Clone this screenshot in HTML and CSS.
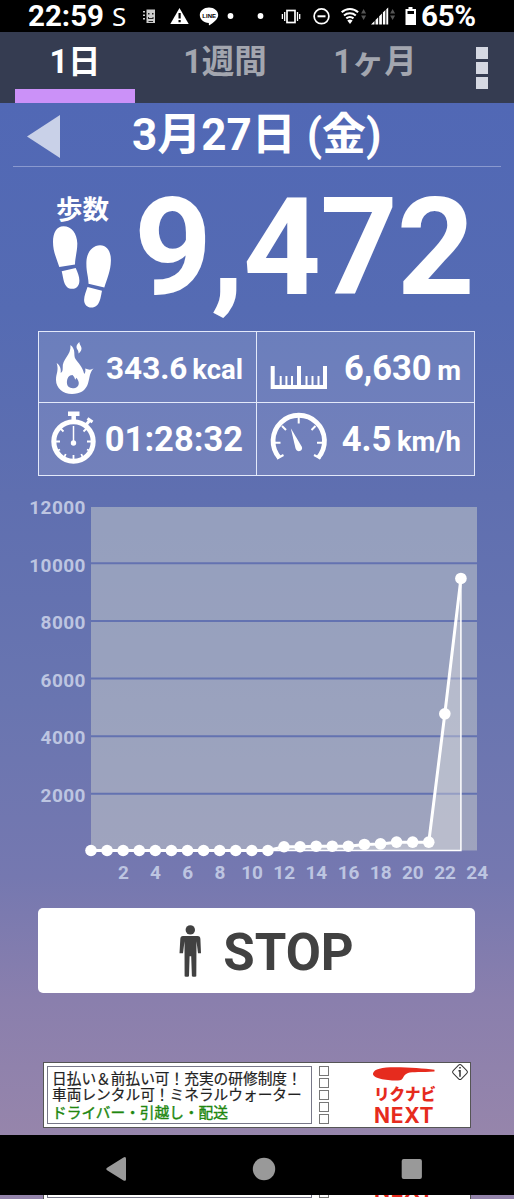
FILE: index.html
```
<!DOCTYPE html>
<html lang="ja">
<head>
  <meta charset="UTF-8">
  <title>歩数計</title>
  <link rel="stylesheet" href="styles.css">
</head>
<body>

  <!-- status bar -->
  <div id="status-bar">
    <span class="clock">22:59</span>
    <span class="carrier">S</span>
    <svg class="status-icons" width="270" height="32" viewBox="135 0 270 32">
      <g fill="#ccc">
        <path d="M146.500 9.500h8.500v13.500h-8.500z"/>
        <path d="M143 11h2v1.500h-2zM143 14.500h2v1.500h-2zM143 18h2v1.500h-2z"/>
        <path fill="#222" d="M148 13h1.500v1.500H148zM152 13h1.500v1.500H152zM148 17h1v1h3.500v-1h1v2H148zM148.500 21h4.500v1h-4.500z"/>
      </g>
      <path fill="#fff" d="M179.500 8l9.200 16h-18.400z"/>
      <path fill="#000" d="M178.500 13h2.200v5.500h-2.200zM178.500 20h2.200v2.200h-2.200z"/>
      <path fill="#fff" d="M209 7.500c5 0 9.200 3.400 9.200 7.500 0 4-5 8-8.700 10.300-.6.300-.8-.3-.6-2.300-5.300-.2-9.100-3.700-9.100-8 0-4.100 4.200-7.500 9.200-7.500z"/>
      <text x="209.200" y="17.500" class="line-logo">LINE</text>
      <circle cx="230.500" cy="16" r="2.900" fill="#fff"/>
      <circle cx="260.500" cy="16" r="2.900" fill="#fff"/>
      <g fill="none" stroke="#fff" stroke-width="1.700">
        <rect x="287" y="10.500" width="8" height="12"/>
        <path d="M284.700 12v9M297.500 12v9M282.400 14v5M299.700 14v5" stroke-width="1.300"/>
        <circle cx="321.500" cy="16.300" r="7.400"/>
        <path d="M317.500 16.300h8" stroke-width="2"/>
      </g>
      <g fill="none" stroke="#fff" stroke-width="2.100">
        <path d="M341.700 12.300a12 12 0 0 1 16.400 0M344 15.500a9 9 0 0 1 11.800 0M346.300 18.400a5.500 5.500 0 0 1 7.200 0"/>
      </g>
      <path fill="#fff" d="M350 24l-2.700-3.400a4 4 0 0 1 5.300 0z"/>
      <path fill="#555" d="M363.600 9l2.500 4.500h-5zM363.600 20l2.500-4.500h-5zM392.600 9l2.500 4.500h-5zM392.600 20l2.500-4.500h-5z"/>
      <path fill="#fff" d="M371 24.500l3.500-3.500v3.500zM375.500 20l2.700-2.700v7.200h-2.700zM379.200 16.300l2.700-2.700v10.900h-2.700zM382.900 12.600l2.500-2.500v14.400h-2.500zM386.300 9.200l1.900-1.700v17h-1.900z"/>
    </svg>
    <svg class="battery" width="12" height="20" viewBox="0 0 12 20">
      <path fill="#fff" fill-rule="evenodd" d="M3.500 1h4v2H11v16H.5V3h3zM2.500 5v3h6.500V5z"/>
    </svg>
    <span class="percent">65%</span>
  </div>

  <!-- tabs -->
  <div id="tabs">
    <div class="tab active">1日</div>
    <div class="tab">1週間</div>
    <div class="tab">1ヶ月</div>
    <div class="menu"><i></i><i></i><i></i></div>
  </div>

  <div id="main">
    <div id="date-row">
      <svg class="prev" width="34" height="44" viewBox="0 0 34 44"><path d="M33 0v43L0 21.500z"/></svg>
      <h1>3月27日 (金)</h1>
    </div>

    <div id="steps">
      <div class="steps-label">
        <span>歩数</span>
        <svg width="60" height="84" viewBox="52 225 60 84" fill="#fff">
          <path d="M59.300 267c-2.500-8-6.300-15-6.300-25 0-9 3.500-15.700 10.500-15.700 8 0 13.500 7 13.800 17 .1 8-2.300 14.500-2.300 21.200z"/>
          <path d="M61.700 271.200l14-3.200c2 4.500 3.700 8.500 3.700 12.500 0 5-2.600 8.300-7 8.300-8.700 0-8.700-9.800-10.700-17.600z"/>
          <path d="M88.500 283.800c.2-6.500-2.400-11.500-2.100-21.800.3-10 6.300-16.800 13.700-16.800 7 0 11 6.300 10.800 15.500-.2 10-3.700 18-6.600 26.700z"/>
          <path d="M87.500 287l14.500 3.800c-1.400 6.500-2 16.800-10.500 16.800-4.500 0-7.400-3.200-7.400-7.600 0-4.600 2-8.500 3.400-13z"/>
        </svg>
      </div>
      <div class="steps-count">9,472</div>
    </div>

    <div id="stats">
      <div class="stat">
        <!-- flame -->
        <svg width="62" height="70" viewBox="39 332 62 70" fill="#fff">
          <path fill-rule="evenodd" d="M70.500 345c6 5 2.500 10 5 14 2.700 4.500 7 7 8.700 15 1.500-1.500 1.300-3.500 1-5.500 3.500 1.500 6 1.500 8.300 0-4 4-3.700 9-5.500 15-2.200 7-8 10.500-16 10.500-9 0-16-6-16-14 0-7 3-9 .7-17 3.500 2.500 4.500 6 4 10 1.800-1 2-3 2-5-.7-9.500 8.500-12 7.800-23zM72.500 375c-3.700 0-5.500 3-5.600 7.500 0 3.700 2.500 5.700 5.800 5.700 3.600 0 6.500-2 6-6-.3-2-1.500-3-2.100-4.500-.7.800-.8 1.500-1.500 2-.4-2-1.300-3.500-2.600-4.700z"/>
          <path d="M79.500 342c-.3 3 2 3.500 2 6.500 0 2-1.300 3.700-3 5 .3-3.700-2-3.700-2-6.700 0-2 1.400-3.500 3-4.800z"/>
        </svg>
        <p class="small-num">343.6 <small>kcal</small></p>
      </div>
      <div class="stat">
        <!-- ruler -->
        <svg width="72" height="70" viewBox="258 333 72 70" fill="none" stroke="#fff">
          <path stroke-width="4" d="M273.700 367v21M300 367v21M326 367v21M271.700 388h56.300"/>
          <path stroke-width="2" d="M281.700 377v10M287.400 377v10M293 377v10M307.500 377v10M313.500 377v10M319.500 377v10"/>
        </svg>
        <p>6,630 <small>m</small></p>
      </div>
      <div class="stat">
        <!-- stopwatch -->
        <svg width="62" height="70" viewBox="39 405 62 70" fill="none" stroke="#fff">
          <circle cx="73.500" cy="443.500" r="19.700" stroke-width="5"/>
          <path stroke-width="4.500" d="M68 415.700h11.500M73.700 416v8"/>
          <path stroke-width="3" d="M86 427l4-5"/>
          <path stroke-width="3" d="M87.500 420.500l5 3.500"/>
          <path stroke-width="1.800" d="M54 443.500h6M87 443.500h6M73.500 457v6M60.500 430.500l3 3M86.500 430.500l-3 3M64 460l1.700-4M83 460l-1.700-4M57 453l3-1.500M90 453l-3-1.500"/>
          <path stroke-width="1.500" d="M73.500 428v16"/>
          <circle cx="73.500" cy="445" r="2.700" fill="#fff" stroke="none"/>
        </svg>
        <p>01:28:32</p>
      </div>
      <div class="stat">
        <!-- speed meter -->
        <svg width="72" height="70" viewBox="258 405 72 70" fill="none" stroke="#fff">
          <path stroke-width="4.800" d="M280.500 460A25.700 25.700 0 1 1 319 460"/>
          <path stroke-width="2" d="M299.700 419v6.500M276 444.700h5.500M318 444.700h5.500M283 428l4 4M316.500 428l-4 4M278 460.500l6.500-3.500M321.500 460.500l-6.500-3.500"/>
          <path fill="#fff" stroke="none" d="M291.800 430.300l11 18.500c1.700 4.500-5 6.500-6.300 1.500z"/>
        </svg>
        <p>4.5 <small>km/h</small></p>
      </div>
    </div>

    <svg id="chart" width="514" height="410" viewBox="0 485 514 410"></svg>

    <button id="stop-button">
      <svg width="22" height="52" viewBox="0 0 22 52" fill="#414141">
        <circle cx="11.300" cy="4.900" r="4.700"/>
        <path d="M4 11h14.500c2 0 2.800 1 2.900 3l.6 14.200h-3l-1.500-12-.2 35q-2 1-4.400 0l-.7-20h-1.600l-.6 20q-2.300 1-4.400 0l-.1-35-1.500 12H.5L1.300 14c.1-2 .9-3 2.700-3z"/>
      </svg>
      <span>STOP</span>
    </button>

    <div class="ad">
      <div class="ad-text">
        <p>日払い＆前払い可！充実の研修制度！</p>
        <p>車両レンタル可！ミネラルウォーター</p>
        <p class="green">ドライバー・引越し・配送</p>
      </div>
      <div class="ad-boxes"><i></i><i></i><i></i><i></i><i></i></div>
      <div class="ad-logo">
        <svg width="62" height="14" viewBox="0 0 62 14"><path fill="#e62b1e" d="M0 6.500C1 2 9 .3 22 .3c15 0 29 1.300 39.500 2.500v1.600c-13 .8-22 .2-26.500 1.500-6 2-3.500 7.600-10 7.600C15 13.500-.7 11.500 0 6.500z"/></svg>
        <b class="kana">リクナビ</b>
        <b class="next">NEXT</b>
      </div>
      <svg class="ad-info" width="18" height="18" viewBox="0 0 18 18" fill="none" stroke="#333">
        <rect x="3.200" y="3.200" width="11.600" height="11.600" rx="2" transform="rotate(45 9 9)"/>
        <path stroke-width="1.500" d="M7.500 7.800H9v6M8.200 4.800h1.600"/>
      </svg>
    </div>
  </div>

  <!-- navigation bar -->
  <div id="nav-bar">
    <svg width="514" height="60" viewBox="0 0 514 60" fill="#999">
      <path d="M107.500 35.500q-2.500-1.300 0-3l16-10q2.500-1.300 2.500 1.200v20.500q0 2.500-2.500 1.200z"/>
      <circle cx="264" cy="34" r="11.200"/>
      <rect x="401.700" y="24" width="20.200" height="20" rx="2"/>
    </svg>
  </div>
  <div id="under-nav">
    <div class="ad">
      <div class="ad-text"></div>
      <div class="ad-boxes"><i></i><i></i><i></i><i></i><i></i></div>
      <div class="ad-logo"><b class="next">NEXT</b></div>
    </div>
  </div>

  <script>
    const steps = [0, 0, 0, 0, 0, 0, 0, 0, 0, 0, 0, 0, 130, 130, 150, 150, 150, 210, 230, 290, 290, 290, 4760, 9472];
    const left = 91, right = 477, top0 = 507, bottom = 850.5;
    const hourX = h => left + h * (right - left) / 24;
    const stepY = v => bottom - v * 0.02872;

    let out = `<rect class="plot" x="${left}" y="${top0}" width="${right - left}" height="${bottom - top0}"/>`;

    for (let v = 2000; v <= 12000; v += 2000) {
      const y = 851.5 - v * 0.02882;
      if (v < 12000) out += `<path class="grid" d="M${left} ${y}H${right}"/>`;
      out += `<text x="85.800" y="${y + 8.200}" text-anchor="end">${v}</text>`;
    }
    for (let h = 2; h <= 24; h += 2) {
      out += `<text class="hour" x="${hourX(h) + 0.200}" y="879" text-anchor="middle">${h}</text>`;
    }

    const points = steps.map((v, h) => hourX(h) + ',' + stepY(v)).join(' ');
    out += `<polygon class="area" points="${points} ${hourX(23)},${bottom} ${left},${bottom}"/>`;
    out += `<polyline class="line" points="${points}"/>`;
    steps.forEach((v, h) => {
      out += `<circle cx="${hourX(h)}" cy="${stepY(v)}" r="5.800"/>`;
    });
    document.getElementById('chart').innerHTML = out;
  </script>
</body>
</html>
```
FILE: styles.css
```
* { margin: 0; padding: 0; box-sizing: border-box; }

body {
  width: 514px;
  height: 1199px;
  overflow: hidden;
  font-family: Roboto, "Noto Sans CJK JP", sans-serif;
  color: #fff;
  background-color: #9484ab;
}

svg { display: block; flex: none; }

#status-bar {
  display: flex;
  align-items: center;
  height: 32px;
  padding-left: 28px;
  background-color: #000;
  line-height: 32px;
  white-space: nowrap;
}

.clock { width: 84px; font-size: 29.5px; font-weight: 700; }
.carrier { width: 23px; font-family: "Noto Sans", sans-serif; font-size: 26px; }
.line-logo {
  font-family: "Liberation Sans", sans-serif;
  font-size: 6px;
  font-weight: bold;
  text-anchor: middle;
}
.battery { width: 12px; }
.percent { margin-left: 4px; font-size: 29.5px; font-weight: 700; letter-spacing: -0.3px; }

#tabs {
  display: flex;
  height: 71px;
  padding-left: 15px;
  background-color: #353c51;
}

.tab {
  width: 120px;
  margin-right: 30px;
  padding-top: 6px;
  font-size: 32.5px;
  font-weight: 700;
  line-height: 48px;
  text-align: center;
  color: #a3a6af;
  white-space: nowrap;
}
.tab.active { color: #fff; border-bottom: 14px solid #cb91f8; }

.menu {
  display: flex;
  flex-direction: column;
  gap: 3.5px;
  padding: 15px 0 0 11px;
}
.menu i { width: 12px; height: 11.5px; background-color: #d5d8e2; }

#main {
  height: 1032px;
  background: linear-gradient(#5168b5 0%, #556bb3 20%, #5f6fb0 38%, #6975b0 58%, #7578b0 75%, #8a7fad 87%, #9685ab 100%);
}

#date-row {
  display: flex;
  height: 64px;
  margin: 0 13px;
  padding: 12px 0 0 14px;
  border-bottom: 1px solid #8a99cf;
}
.prev { fill: #c9d1e8; }
#date-row h1 {
  margin: -11px 0 0 71px;
  font-size: 44px;
  font-weight: 700;
  line-height: 62px;
  white-space: nowrap;
}

#steps { display: flex; height: 164px; padding: 27px 0 0 52px; }
.steps-label { width: 82px; }
.steps-label span {
  display: block;
  height: 31px;
  padding-left: 4px;
  font-size: 26.5px;
  font-weight: 700;
  line-height: 31px;
}
.steps-count { font-size: 136px; font-weight: 700; line-height: 107px; letter-spacing: -1.2px; }

#stats {
  display: grid;
  grid-template-columns: 218px 217px;
  grid-template-rows: 71px 72px;
  width: 437px;
  margin-left: 38px;
  border: 1px solid #e3e9fa;
  background-color: rgba(255, 255, 255, 0.13);
}
.stat {
  display: flex;
  justify-content: space-between;
  padding-right: 13px;
  border: 0 solid #e3e9fa;
}
.stat:nth-child(odd) { border-right-width: 1.5px; }
.stat:nth-child(-n+2) { border-bottom-width: 1.5px; }
.stat p {
  font-size: 34.5px;
  font-weight: 700;
  line-height: 73px;
  white-space: nowrap;
}
.stat small { margin-left: -3px; font-size: 27.5px; }
.stat .small-num { font-size: 31.5px; }

#chart { margin-top: 9px; }
#chart text { font-size: 19px; font-weight: 700; letter-spacing: 0.4px; fill: #bdc5e1; }
#chart .hour { letter-spacing: 0; }
.plot { fill: rgba(211, 215, 207, 0.46); }
.grid { fill: none; stroke: #6372b1; stroke-width: 2; }
.area { fill: rgba(225, 225, 225, 0.4); stroke: #fff; stroke-width: 1.5; }
.line { fill: none; stroke: #fff; stroke-width: 3; }
#chart circle { fill: #fff; }

#stop-button {
  display: flex;
  align-items: center;
  justify-content: center;
  gap: 22px;
  width: 437px;
  height: 85px;
  margin: 13px 0 0 38px;
  padding-left: 20px;
  border: none;
  border-radius: 5px;
  background-color: #fff;
  color: #414141;
  font-family: inherit;
  font-size: 51px;
  font-weight: 700;
}
#stop-button span { padding-top: 4px; }

.ad {
  position: relative;
  display: flex;
  width: 428px;
  height: 66px;
  margin: 69px 0 0 43px;
  padding: 3px;
  border: 1px solid #555;
  background-color: #fff;
}
.ad-text {
  width: 265px;
  height: 58px;
  padding: 2px 0 0 4px;
  border: 1px solid #778;
  color: #222;
}
.ad-text p {
  height: 16px;
  font-family: "Noto Sans CJK JP", sans-serif;
  font-size: 14.7px;
  line-height: 17px;
  white-space: nowrap;
  -webkit-text-stroke: 0.2px;
}
.ad-text .green { margin-top: 2px; color: #21870f; -webkit-text-stroke: 0.4px; }
.ad-boxes { display: flex; flex-direction: column; gap: 2.2px; margin-left: 7px; }
.ad-boxes i { width: 10px; height: 10px; border: 1px solid #777; }
.ad-logo {
  display: flex;
  flex-direction: column;
  width: 64px;
  margin-left: 44px;
  padding-top: 1px;
  color: #e62b1e;
  line-height: 20px;
}
.kana { height: 20px; margin-top: 2px; padding-left: 1px; font-family: "Noto Sans CJK JP", sans-serif; font-size: 15.5px; font-weight: 900; }
.next { height: 20px; margin-top: 3px; padding-left: 1px; font-family: Inter, sans-serif; font-size: 21px; letter-spacing: 0.7px; }
.ad-info { position: absolute; top: 0; right: 1px; }

#nav-bar { height: 60px; background-color: #000; }

/* the bottom of the banner still shows below the navigation bar */
#under-nav {
  display: flex;
  align-items: flex-end;
  height: 4px;
  overflow: hidden;
}
#under-nav .ad { flex: none; margin: 0 0 -3px 43px; }
#under-nav .ad-logo { padding-top: 37px; }
```
